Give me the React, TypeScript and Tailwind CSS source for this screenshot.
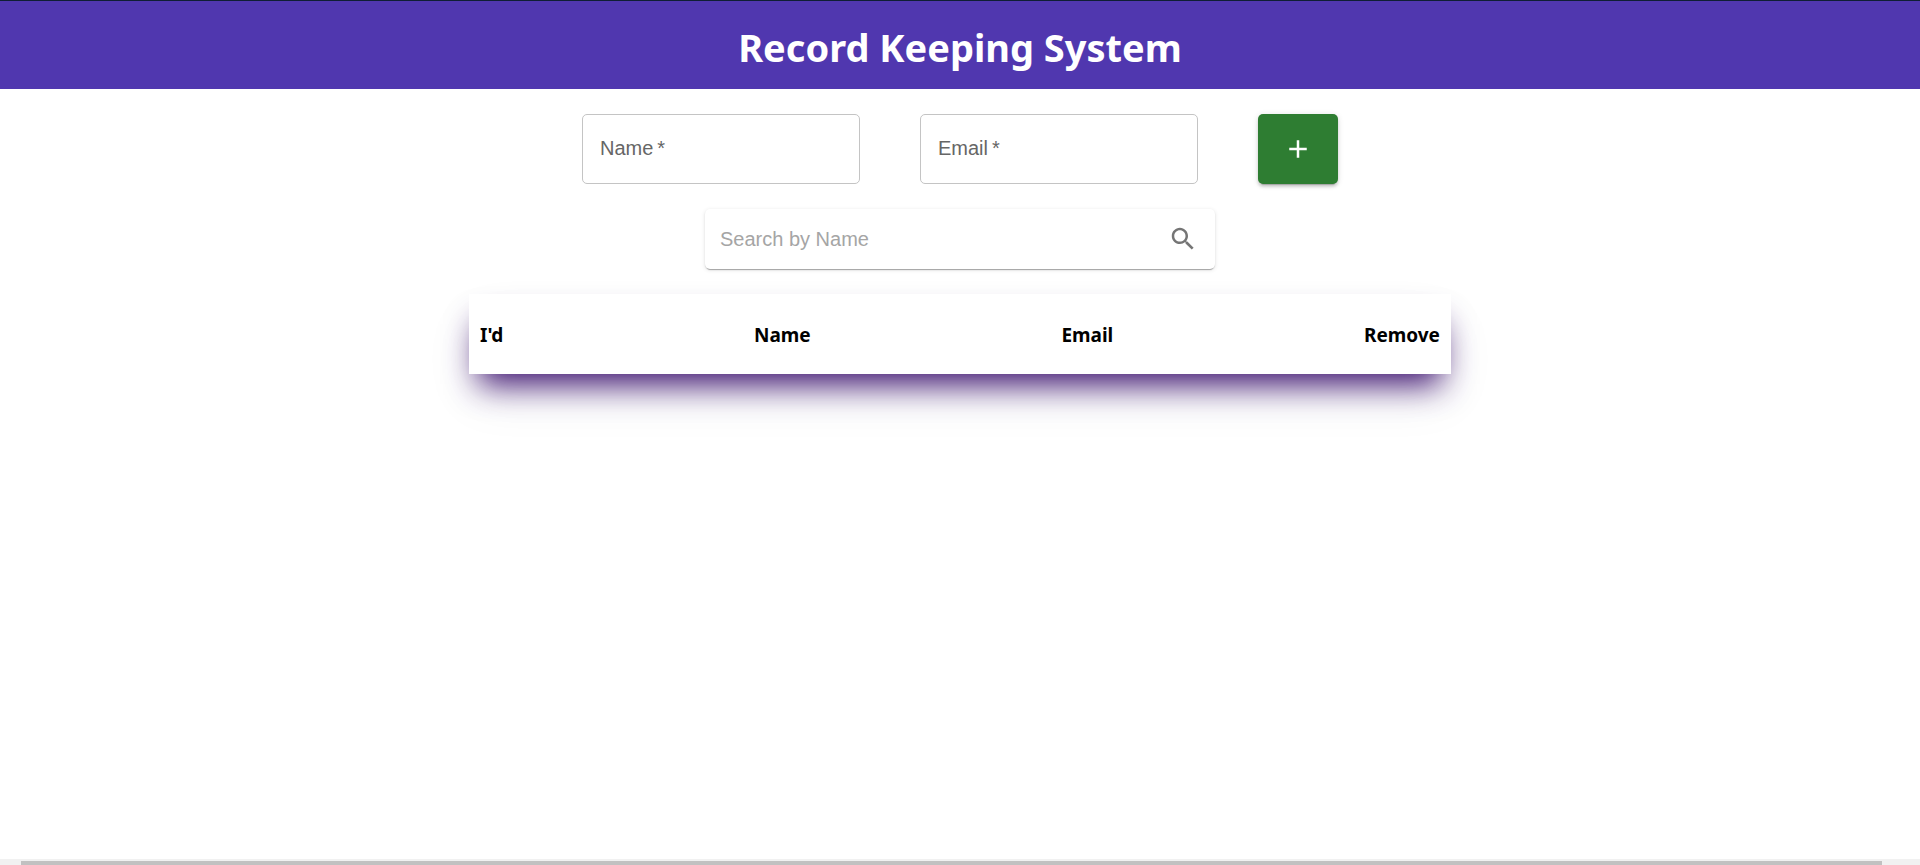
import { useState } from "react";
import type { FormEvent } from "react";

type Person = { id: number; name: string; email: string };

type FieldProps = {
  id: string;
  label: string;
  type: string;
  value: string;
  onChange: (value: string) => void;
};

function Field({ id, label, type, value, onChange }: FieldProps) {
  return (
    <div className="relative w-[278px]">
      <input
        id={id}
        type={type}
        required
        placeholder=" "
        value={value}
        onChange={(e) => onChange(e.target.value)}
        className="peer h-[70px] w-full rounded-[5px] border border-[#c4c4c4] bg-transparent px-[17px] text-xl text-black/85 outline-none focus:border-[#1976d2]"
      />
      <label
        htmlFor={id}
        className="pointer-events-none absolute -top-2 left-[14px] bg-white px-1 text-base/4 text-[#666666] peer-placeholder-shown:top-5 peer-placeholder-shown:text-xl/7 peer-focus:-top-2 peer-focus:text-base/4"
      >
        {label}&thinsp;*
      </label>
    </div>
  );
}

export default function App() {
  const [people, setPeople] = useState<Person[]>([]);
  const [name, setName] = useState("");
  const [email, setEmail] = useState("");
  const [query, setQuery] = useState("");

  const addPerson = (e: FormEvent) => {
    e.preventDefault();
    setPeople([...people, { id: people.length + 1, name, email }]);
    setName("");
    setEmail("");
  };

  const shown = people.filter((p) => p.name.toLowerCase().includes(query.toLowerCase()));

  return (
    <div className="flex min-h-screen flex-col bg-white font-['Liberation_Sans',Arial,sans-serif]">
      <header className="flex h-[89px] items-center justify-center border-t border-[#0f1e35] bg-[#5037af] pt-1">
        <h1 className="font-['Noto_Sans',sans-serif] text-[38px]/[56px] font-bold text-white">
          Record Keeping System
        </h1>
      </header>

      <main className="flex flex-1 flex-col items-center gap-[25px] pt-[25px]">
        <form onSubmit={addPerson} className="flex flex-wrap justify-center gap-[60px]">
          <Field id="name" label="Name" type="text" value={name} onChange={setName} />
          <Field id="email" label="Email" type="email" value={email} onChange={setEmail} />
          <button
            type="submit"
            aria-label="Add record"
            className="flex h-[70px] w-20 items-center justify-center rounded-[5px] bg-[#2e7d32] text-white shadow-[0_4px_1px_-3px_rgba(0,0,0,0.2),0_3px_3px_0_rgba(0,0,0,0.14),0_1px_6px_0_rgba(0,0,0,0.12)]"
          >
            <svg viewBox="0 0 24 24" className="size-[30px]" fill="currentColor" aria-hidden="true">
              <path d="M19 13h-6v6h-2v-6H5v-2h6V5h2v6h6v2z" />
            </svg>
          </button>
        </form>

        <div
          role="search"
          className="flex h-[60px] w-full max-w-[510px] items-center rounded-[5px] bg-white pr-[17px] pb-px pl-[15px] shadow-[0_3px_1px_-2px_rgba(0,0,0,0.2),0_1px_1px_0_rgba(0,0,0,0.14),0_1px_4px_0_rgba(0,0,0,0.12)]"
        >
          <input
            type="search"
            aria-label="Search by Name"
            placeholder="Search by Name"
            value={query}
            onChange={(e) => setQuery(e.target.value)}
            className="min-w-0 flex-1 bg-transparent text-xl text-black/85 outline-none placeholder:text-[#a5a5a5]"
          />
          <button type="button" aria-label="Search" className="text-[#757575]">
            <svg viewBox="0 0 24 24" className="size-[30px]" fill="currentColor" aria-hidden="true">
              <path d="M15.5 14h-.79l-.28-.27C15.41 12.59 16 11.11 16 9.5 16 5.91 13.09 3 9.5 3S3 5.91 3 9.5 5.91 16 9.5 16c1.61 0 3.09-.59 4.23-1.57l.27.28v.79l5 4.99L20.49 19l-4.99-5zm-6 0C7.01 14 5 11.99 5 9.5S7.01 5 9.5 5 14 7.01 14 9.5 11.99 14 9.5 14z" />
            </svg>
          </button>
        </div>

        <table className="block w-full max-w-[982px] bg-white px-[11px] pt-[26px] pb-6 font-['Noto_Sans',sans-serif] text-[19px]/[30px] text-black shadow-[0_20px_32px_-10px_rgb(60,16,111),0_25px_50px_-5px_rgba(50,50,93,0.1)]">
          <thead className="block">
            <tr className="flex justify-between">
              <th className="font-bold">I'd</th>
              <th className="font-bold">Name</th>
              <th className="font-bold">Email</th>
              <th className="font-bold">Remove</th>
            </tr>
          </thead>
          <tbody className="block">
            {shown.map((p) => (
              <tr key={p.id} className="flex justify-between pt-4">
                <td>{p.id}</td>
                <td>{p.name}</td>
                <td>{p.email}</td>
                <td>
                  <button type="button" onClick={() => setPeople(people.filter((q) => q.id !== p.id))}>
                    Remove
                  </button>
                </td>
              </tr>
            ))}
          </tbody>
        </table>
      </main>

      <div aria-hidden="true" className="flex h-[6px] bg-[#f1f1f1] pt-[2px] pr-[38px] pl-[21px]">
        <div className="flex-1 bg-[#c1c1c1]" />
      </div>
    </div>
  );
}
